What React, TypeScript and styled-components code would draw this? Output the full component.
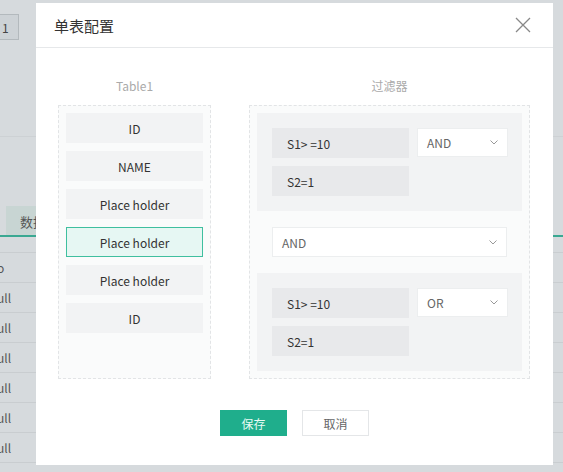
import React from "react";
import styled, { createGlobalStyle } from "styled-components";

const GlobalStyle = createGlobalStyle`
  html, body {
    margin: 0;
    padding: 0;
    background: #d6dadd;
    font-family: "Noto Sans CJK SC", "Noto Sans", "Liberation Sans", sans-serif;
  }
  * { box-sizing: border-box; }
`;

const Page = styled.div`
  position: relative;
  width: 563px;
  height: 472px;
  overflow: hidden;
  background: #d6dadd;
  display: flex;
  flex-direction: column;
`;

const TopBar = styled.div`
  height: 137px;
  border-bottom: 1px solid #cdd1d4;
  padding-top: 14px;
`;

const NumBox = styled.div`
  width: 20px;
  height: 26px;
  margin-left: -1px;
  border: 1px solid #b3b9bd;
  background: #cdd2d6;
  font-size: 12px;
  color: #444;
  display: flex;
  align-items: center;
  padding-left: 2px;
`;

const TabBar = styled.div`
  margin-top: 69px;
  height: 31px;
  border-bottom: 2px solid #3aa892;
  display: flex;
  padding-left: 6px;
`;

const Tab = styled.div`
  width: 60px;
  background: #c8d5d3;
  font-size: 13px;
  color: #555;
  padding: 6px 0 0 14px;
`;

const TableHead = styled.div`
  height: 16px;
  border-bottom: 1px solid #c9cdd0;
`;

const Row = styled.div`
  height: 30px;
  border-bottom: 1px solid #c9cdd0;
  font-size: 12px;
  color: #555;
  display: flex;
  align-items: center;
  text-indent: -3px;
`;

const Modal = styled.div`
  position: absolute;
  left: 36px;
  top: 3px;
  width: 517px;
  height: 462px;
  background: #fff;
  display: flex;
  flex-direction: column;
`;

const Header = styled.div`
  height: 45px;
  border-bottom: 1px solid #e6e8ea;
  display: flex;
  align-items: center;
  justify-content: space-between;
  padding: 0 22px 0 18px;
`;

const Title = styled.div`
  font-size: 15px;
  color: #333;
`;

const Close = styled.svg`
  width: 16px;
  height: 16px;
`;

const Body = styled.div`
  padding: 31px 23px 0 22px;
  display: flex;
  gap: 38px;
`;

const Column = styled.div<{ $w: number }>`
  width: ${(p) => p.$w}px;
  display: flex;
  flex-direction: column;
  gap: 12px;
`;

const Label = styled.div`
  text-align: center;
  font-size: 12px;
  color: #aaa;
  line-height: 14px;
`;

const Panel = styled.div<{ $gap: number }>`
  height: 274px;
  border: 1px dashed #e2e4e6;
  background: #fafbfb;
  padding: 7px;
  display: flex;
  flex-direction: column;
  gap: ${(p) => p.$gap}px;
`;

const Field = styled.div<{ $active?: boolean }>`
  width: 137px;
  height: 30px;
  background: ${(p) => (p.$active ? "#e6f7f3" : "#f2f3f4")};
  border: 1px solid ${(p) => (p.$active ? "#3fbf9f" : "transparent")};
  display: flex;
  align-items: center;
  justify-content: center;
  font-size: 12px;
  color: #333;
`;

const Group = styled.div`
  height: 98px;
  background: #f2f3f4;
  padding: 15px;
  display: grid;
  grid-template-columns: 137px 91px;
  grid-auto-rows: 30px;
  column-gap: 8px;
  row-gap: 8px;
  align-content: start;
`;

const Cond = styled.div`
  background: #e8e9eb;
  font-size: 12px;
  color: #333;
  display: flex;
  align-items: center;
  padding-left: 15px;
`;

const Select = styled.div<{ $h?: number }>`
  height: ${(p) => p.$h ?? 29}px;
  background: #fff;
  border: 1px solid #eceeef;
  display: flex;
  align-items: center;
  justify-content: space-between;
  padding: 0 9px;
  font-size: 12px;
  color: #666;
`;

const Between = styled.div`
  padding: 16px 15px;
`;

const Chevron = () => (
  <svg width="8" height="5" viewBox="0 0 8 5">
    <path d="M0.5 0.5 L4 4 L7.5 0.5" fill="none" stroke="#999" strokeWidth="1" />
  </svg>
);

const Footer = styled.div`
  margin-top: 31px;
  display: flex;
  justify-content: center;
  gap: 15px;
`;

const Button = styled.div<{ $primary?: boolean }>`
  width: 67px;
  height: 26px;
  display: flex;
  align-items: center;
  justify-content: center;
  font-size: 12px;
  background: ${(p) => (p.$primary ? "#1fae8c" : "#fff")};
  color: ${(p) => (p.$primary ? "#e8fbf5" : "#666")};
  border: 1px solid ${(p) => (p.$primary ? "#1fae8c" : "#e4e6e8")};
`;

const fields = ["ID", "NAME", "Place holder", "Place holder", "Place holder", "ID"];

const FilterGroup: React.FC<{ op: string }> = ({ op }) => (
  <Group>
    <Cond>S1&gt; =10</Cond>
    <Select>
      {op}
      <Chevron />
    </Select>
    <Cond>S2=1</Cond>
  </Group>
);

export default function App() {
  return (
    <>
      <GlobalStyle />
      <Page>
        <TopBar>
          <NumBox>1</NumBox>
        </TopBar>
        <TabBar>
          <Tab>数据</Tab>
        </TabBar>
        <TableHead />
        <Row>o</Row>
        {[0, 1, 2, 3, 4, 5].map((i) => (
          <Row key={i}>ull</Row>
        ))}
        <Modal>
          <Header>
            <Title>单表配置</Title>
            <Close viewBox="0 0 16 16">
              <path d="M1 1 L15 15 M15 1 L1 15" stroke="#888" strokeWidth="1.3" fill="none" />
            </Close>
          </Header>
          <Body>
            <Column $w={153}>
              <Label>Table1</Label>
              <Panel $gap={8}>
                {fields.map((f, i) => (
                  <Field key={i} $active={i === 3}>
                    {f}
                  </Field>
                ))}
              </Panel>
            </Column>
            <Column $w={281}>
              <Label>过滤器</Label>
              <Panel $gap={0}>
                <FilterGroup op="AND" />
                <Between>
                  <Select $h={30}>
                    AND
                    <Chevron />
                  </Select>
                </Between>
                <FilterGroup op="OR" />
              </Panel>
            </Column>
          </Body>
          <Footer>
            <Button $primary>保存</Button>
            <Button>取消</Button>
          </Footer>
        </Modal>
      </Page>
    </>
  );
}
